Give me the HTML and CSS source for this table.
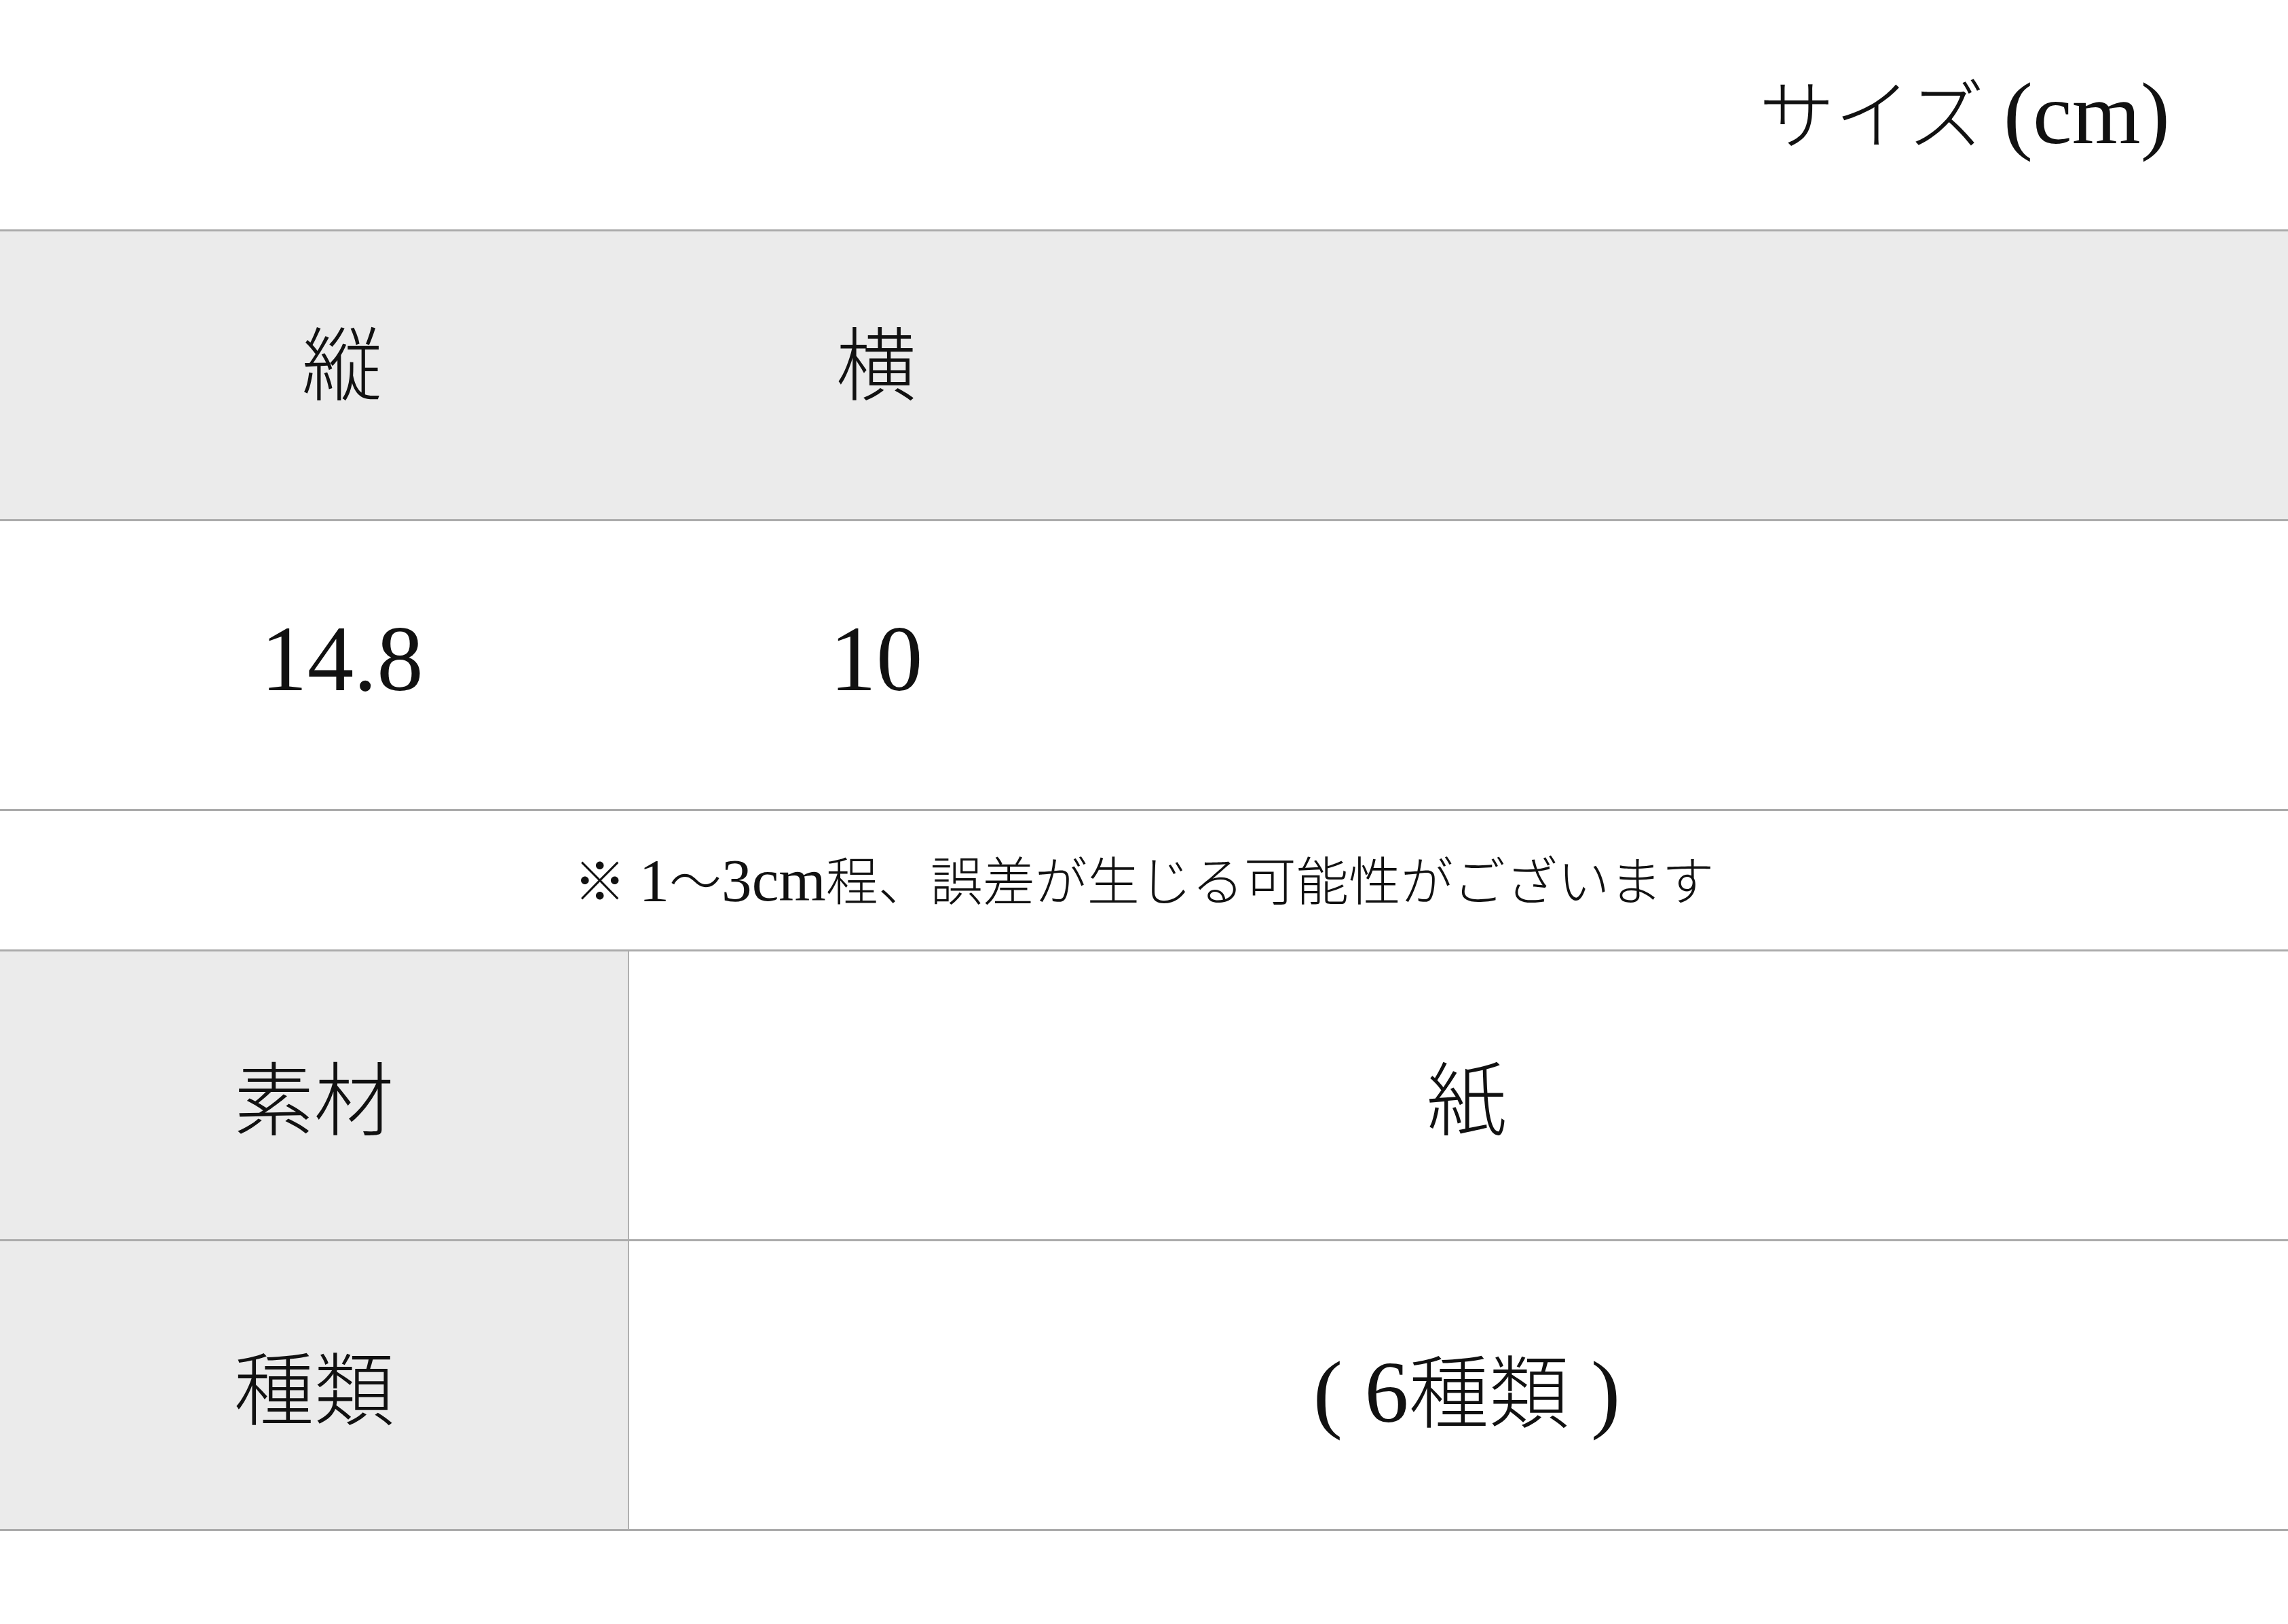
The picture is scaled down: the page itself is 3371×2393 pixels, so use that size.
FILE: index.html
```html
<!DOCTYPE html>
<html lang="ja">
<head>
<meta charset="utf-8">
<title>サイズ (cm)</title>
<link rel="stylesheet" href="styles.css">
</head>
<body>
<div class="page">
  <header class="title-bar">
    <h1 class="title">サイズ <span class="lat">(cm)</span></h1>
  </header>
  <section class="spec">
    <div class="row row-head size-row">
      <div class="cell">縦</div>
      <div class="cell">横</div>
      <div class="cell"></div>
    </div>
    <div class="row row-data size-row">
      <div class="cell"><span class="lat">14.8</span></div>
      <div class="cell"><span class="lat">10</span></div>
      <div class="cell"></div>
    </div>
    <div class="row note-row">
      <p class="note">※ <span class="lat">1</span>〜<span class="lat">3cm</span>程、誤差が生じる可能性がございます</p>
    </div>
    <div class="row pair-row">
      <div class="cell label">素材</div>
      <div class="cell value">紙</div>
    </div>
    <div class="row pair-row last">
      <div class="cell label">種類</div>
      <div class="cell value"><span class="kinds"><span class="lat">( 6</span>種類<span class="lat"> )</span></span></div>
    </div>
  </section>
</div>
</body>
</html>
```

FILE: styles.css
```css
html, body {
  margin: 0;
  padding: 0;
  background: #ffffff;
}

body {
  font-family: "Liberation Serif", "Noto Sans CJK JP", serif;
  color: #111111;
  font-weight: 300;
}

.page {
  width: 3371px;
}

.title-bar {
  height: 338px;
  display: flex;
  align-items: center;
  justify-content: flex-end;
  padding-right: 174px;
  box-sizing: border-box;
}

.title {
  margin: 0;
  font-size: 112px;
  font-weight: 300;
  line-height: 1;
  padding-bottom: 2px;
}

.lat {
  font-size: 1.16em;
  font-weight: 400;
}

.spec {
  display: flex;
  flex-direction: column;
}

.row {
  border-top: 3px solid #ababab;
  box-sizing: content-box;
}

.row.last {
  border-bottom: 3px solid #ababab;
}

.size-row {
  height: 424px;
  display: grid;
  grid-template-columns: 1008px 566px 1fr;
}

.row-head {
  background: #ebebeb;
}

.cell {
  display: flex;
  align-items: center;
  justify-content: center;
  font-size: 118px;
  line-height: 1;
}

.row-head .cell {
  padding-bottom: 22px;
}

.row-data .cell {
  padding-bottom: 18px;
}

.note-row {
  height: 204px;
  display: flex;
  align-items: center;
  justify-content: center;
}

.note {
  margin: 0;
  font-size: 77px;
  line-height: 1;
}

.pair-row {
  height: 424px;
  display: grid;
  grid-template-columns: 927px 1fr;
}

.label {
  background: #ebebeb;
  border-right: 2px solid #b0b0b0;
  padding-top: 22px;
}

.value {
  padding-left: 24px;
  padding-top: 22px;
}

.kinds {
  white-space: pre;
}

.kinds .lat {
  font-size: 1.1em;
}
```
